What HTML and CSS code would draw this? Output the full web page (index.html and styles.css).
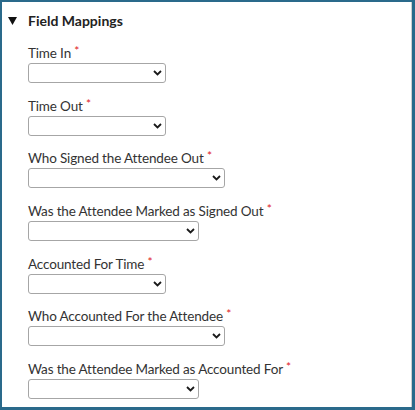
FILE: index.html
```html
<!DOCTYPE html>
<html>
<head>
<meta charset="utf-8">
<link rel="stylesheet" href="styles.css">
</head>
<body>
<div class="panel">
  <div class="title">
    <svg class="caret" viewBox="0 0 9 8"><polygon points="0,0 9,0 4.5,8" fill="#111"/></svg>
    <span class="title-text">Field Mappings</span>
  </div>
  <div class="fields">
    <div class="field">
      <div class="label">Time In <span class="req">*</span></div>
      <div class="sel w1"><select></select><svg class="chev" viewBox="0 0 9 6"><path d="M1 1 L4.5 4.5 L8 1" fill="none" stroke="#1a1a1a" stroke-width="1.8"/></svg></div>
    </div>
    <div class="field">
      <div class="label">Time Out <span class="req">*</span></div>
      <div class="sel w1"><select></select><svg class="chev" viewBox="0 0 9 6"><path d="M1 1 L4.5 4.5 L8 1" fill="none" stroke="#1a1a1a" stroke-width="1.8"/></svg></div>
    </div>
    <div class="field">
      <div class="label">Who Signed the Attendee Out <span class="req">*</span></div>
      <div class="sel w2"><select></select><svg class="chev" viewBox="0 0 9 6"><path d="M1 1 L4.5 4.5 L8 1" fill="none" stroke="#1a1a1a" stroke-width="1.8"/></svg></div>
    </div>
    <div class="field">
      <div class="label">Was the Attendee Marked as Signed Out <span class="req">*</span></div>
      <div class="sel w3"><select></select><svg class="chev" viewBox="0 0 9 6"><path d="M1 1 L4.5 4.5 L8 1" fill="none" stroke="#1a1a1a" stroke-width="1.8"/></svg></div>
    </div>
    <div class="field">
      <div class="label">Accounted For Time <span class="req">*</span></div>
      <div class="sel w1"><select></select><svg class="chev" viewBox="0 0 9 6"><path d="M1 1 L4.5 4.5 L8 1" fill="none" stroke="#1a1a1a" stroke-width="1.8"/></svg></div>
    </div>
    <div class="field">
      <div class="label">Who Accounted For the Attendee <span class="req">*</span></div>
      <div class="sel w2"><select></select><svg class="chev" viewBox="0 0 9 6"><path d="M1 1 L4.5 4.5 L8 1" fill="none" stroke="#1a1a1a" stroke-width="1.8"/></svg></div>
    </div>
    <div class="field">
      <div class="label">Was the Attendee Marked as Accounted For <span class="req">*</span></div>
      <div class="sel w3"><select></select><svg class="chev" viewBox="0 0 9 6"><path d="M1 1 L4.5 4.5 L8 1" fill="none" stroke="#1a1a1a" stroke-width="1.8"/></svg></div>
    </div>
  </div>
</div>
</body>
</html>
```
FILE: styles.css
```css
html, body {
  margin: 0;
  padding: 0;
  background: #fff;
}
body {
  font-family: Lato, "Open Sans", sans-serif;
  color: #333;
}
.panel {
  box-sizing: border-box;
  width: 415px;
  height: 410px;
  border-style: solid;
  border-color: #2a6a8b;
  border-width: 2px 3px 3px 2px;
  box-shadow: inset -1px 0 0 #cfcfcf;
  padding: 8.6px 0 0 6px;
  overflow: hidden;
}
.title {
  display: flex;
  align-items: center;
  height: 20px;
  gap: 11px;
}
.caret {
  width: 9px;
  height: 8px;
  flex: none;
  margin-top: 1px;
}
.title-text {
  font-weight: bold;
  font-size: 14px;
  line-height: 20px;
  color: #222;
}
.fields {
  display: flex;
  flex-direction: column;
  gap: 13.67px;
  padding: 13.4px 0 0 20px;
}
.field {
  display: flex;
  flex-direction: column;
  gap: 1px;
}
.label {
  font-size: 13.5px;
  letter-spacing: -0.15px;
  line-height: 18px;
  color: #333;
}
.req {
  color: #e0201e;
  font-size: 12px;
  vertical-align: top;
  line-height: 14px;
}
.sel {
  position: relative;
  height: 20px;
}
.sel select {
  appearance: none;
  -webkit-appearance: none;
  box-sizing: border-box;
  width: 100%;
  height: 20px;
  border: 1px solid #a6a6a6;
  border-radius: 3px;
  background: #fff;
  margin: 0;
  display: block;
}
.w1 { width: 138px; }
.w2 { width: 197px; }
.w3 { width: 171px; }
.chev {
  position: absolute;
  right: 4px;
  top: 7px;
  width: 9px;
  height: 6px;
}
```
